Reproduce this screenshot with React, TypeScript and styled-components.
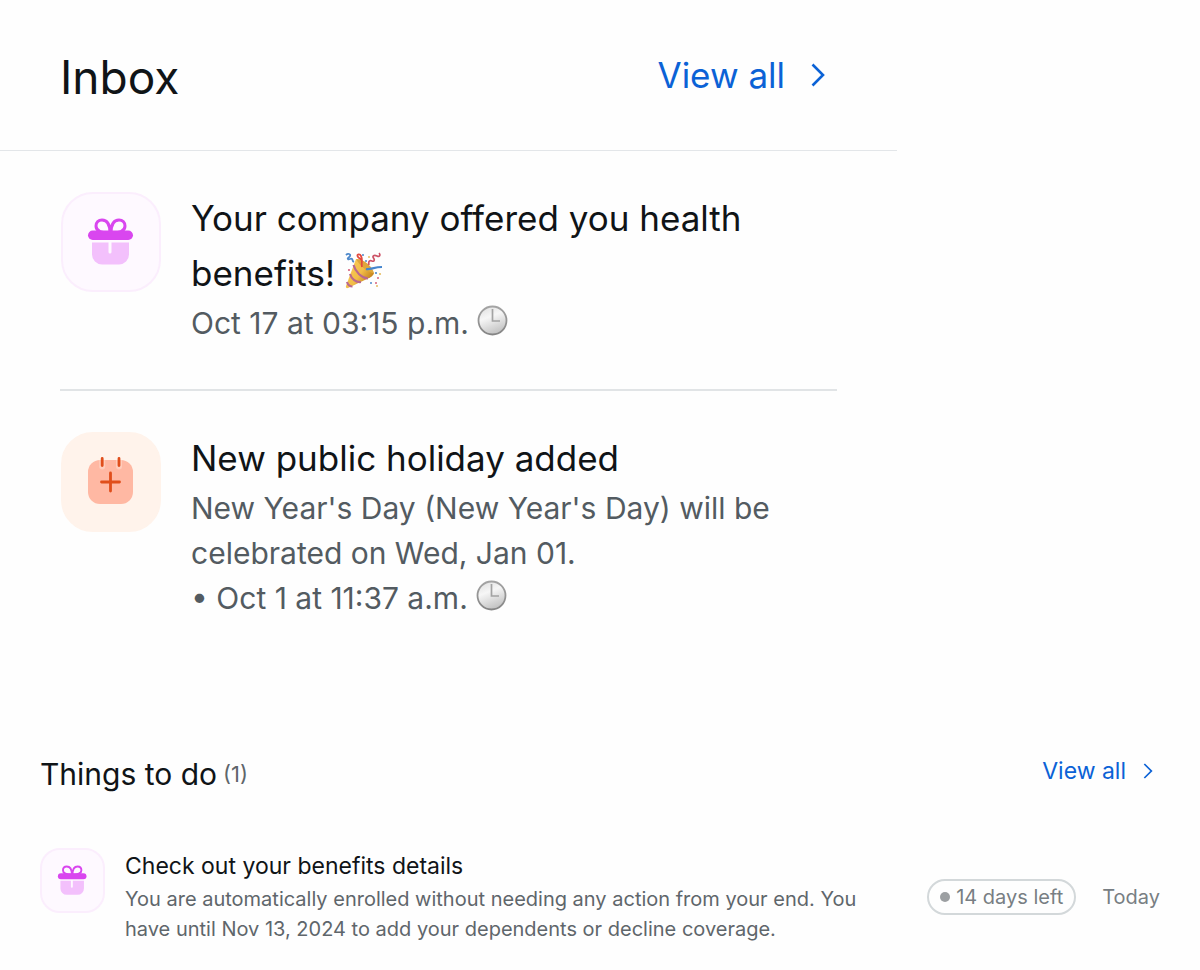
import React from "react";
import styled, { createGlobalStyle } from "styled-components";

const GlobalStyle = createGlobalStyle`
  *, *::before, *::after { box-sizing: border-box; }
  body {
    margin: 0;
    background: #fefefe;
    color: #101417;
    font-family: Inter, "Liberation Sans", sans-serif;
    font-weight: 400;
  }
  h1, h2, h3, p, ul { margin: 0; padding: 0; font-weight: 400; }
  ul { list-style: none; }
`;

const Page = styled.main`
  display: flex;
  flex-direction: column;
  gap: 120px;
`;

const InboxPanel = styled.section`
  width: 100%;
  max-width: 897px;
`;

const InboxHeader = styled.header`
  display: flex;
  align-items: flex-start;
  justify-content: space-between;
  padding: 48px 70px 44px 60px;
  border-bottom: 1px solid #e3e6e9;
`;

const Heading = styled.h2<{ $large?: boolean }>`
  font-size: ${(p) => (p.$large ? 46 : 30)}px;
  line-height: ${(p) => (p.$large ? 58 : 40)}px;
`;

const ViewAllLink = styled.a<{ $large?: boolean }>`
  display: flex;
  align-items: center;
  gap: ${(p) => (p.$large ? 24 : 16)}px;
  color: #0b62d6;
  font-size: ${(p) => (p.$large ? 35 : 23)}px;
  line-height: ${(p) => (p.$large ? 54 : 34)}px;
  text-decoration: none;

  svg {
    width: ${(p) => (p.$large ? 18 : 12)}px;
    height: ${(p) => (p.$large ? 26 : 18)}px;
  }
`;

const MessageList = styled.ul`
  padding: 0 60px;
`;

const Message = styled.li`
  display: flex;
  gap: 30px;
  padding: 40px 0 43px;

  & + & {
    border-top: 2px solid #e1e4e6;
    padding-bottom: 0;
  }
`;

const Tile = styled.div<{ $large?: boolean; $tone: "pink" | "orange" }>`
  flex: none;
  width: ${(p) => (p.$large ? 100 : 65)}px;
  height: ${(p) => (p.$large ? 100 : 65)}px;
  margin: ${(p) => (p.$large ? "1px 0 0 1px" : "0")};
  border-radius: ${(p) => (p.$large ? 32 : 20)}px;
  border: 2px solid ${(p) => (p.$tone === "pink" ? "#fbeefd" : "#fff3eb")};
  background: ${(p) => (p.$tone === "pink" ? "#fef9ff" : "#fff3eb")};

  svg { display: block; width: 100%; height: 100%; }
`;

const MessageBody = styled.div`
  flex: 1;
  min-width: 0;
`;

const MessageTitle = styled.h3`
  font-size: 35px;
  line-height: 55px;
`;

const MessageText = styled.p`
  color: #535b61;
  font-size: 30px;
  line-height: 45px;
`;

const Emoji = styled.svg<{ $size: number; $drop: number }>`
  width: ${(p) => p.$size}px;
  height: ${(p) => p.$size}px;
  vertical-align: -${(p) => p.$drop}px;
`;

const TodoPanel = styled.section`
  padding: 13px 40px 24px;
`;

const TodoHeader = styled.header`
  display: flex;
  align-items: flex-start;
  justify-content: space-between;
  padding-right: 6px;
  margin-bottom: 54px;
`;

const HeadingGroup = styled.div`
  display: flex;
  align-items: center;
  gap: 6px;
`;

const Count = styled.span`
  color: #5f666b;
  font-size: 22px;
  line-height: 40px;
`;

const TodoItem = styled.li`
  display: flex;
  align-items: flex-start;
  gap: 20px;
`;

const TodoBody = styled.div`
  flex: 1;
  max-width: 740px;
`;

const TodoTitle = styled.h3`
  font-size: 23px;
  line-height: 36px;
`;

const TodoText = styled.p`
  color: #5f666b;
  font-size: 20px;
  line-height: 30px;
`;

const TodoMeta = styled.div`
  display: flex;
  align-items: center;
  gap: 26px;
  margin: 31px 0 0 auto;
  color: #787e83;
  font-size: 20px;
  line-height: 32px;
  white-space: nowrap;
`;

const Badge = styled.span`
  display: flex;
  align-items: center;
  gap: 6px;
  padding: 0 11px;
  border: 2px solid #d3d8da;
  border-radius: 18px;

  &::before {
    content: "";
    width: 10px;
    height: 10px;
    border-radius: 50%;
    background: #9c9fa2;
  }
`;

const Chevron = () => (
  <svg viewBox="0 0 18 26" fill="none" aria-hidden="true">
    <path d="M3.5 2.5 14 13 3.5 23.5" stroke="currentColor" strokeWidth="2.6" />
  </svg>
);

const Gift = () => (
  <svg viewBox="2 2 96 96" fill="none" aria-hidden="true">
    <path
      d="M49 41c0-8-2-13-8-13-3.500 0-6 2.300-6 6 0 4.500 3.500 7 14 7Zm1 0c0-8 2-13 8-13 3.500 0 6 2.300 6 6 0 4.500-3.500 7-14 7Z"
      stroke="#d946ef"
      strokeWidth="3"
    />
    <rect x="27" y="38.500" width="45" height="9.500" rx="4.700" fill="#d946ef" />
    <path
      d="M31 50.500h16.500v9.500a1.500 1.500 0 0 0 3 0v-9.500H68v12a10 10 0 0 1-10 10H41a10 10 0 0 1-10-10Z"
      fill="#f3c0fc"
    />
  </svg>
);

const CalendarPlus = () => (
  <svg viewBox="2 2 96 96" fill="none" aria-hidden="true">
    <rect x="27" y="28" width="45" height="44" rx="12" fill="#ffb8a3" />
    <path
      d="M41.200 25v9.500M58 25v9.500"
      stroke="#fff3eb"
      strokeWidth="6"
      strokeLinecap="round"
      opacity=".35"
    />
    <path
      d="M41.200 26.500v7M58 26.500v7M49.500 41v18M40.500 50h18"
      stroke="#e04e1b"
      strokeWidth="2.800"
      strokeLinecap="round"
    />
  </svg>
);

const PartyPopper = () => (
  <Emoji $size={38} $drop={4} viewBox="0 0 38 38" fill="none" role="img" aria-label="Party popper">
    <defs>
      <linearGradient id="cone" x1="5" y1="18" x2="22" y2="30" gradientUnits="userSpaceOnUse">
        <stop stopColor="#f6c650" />
        <stop offset=".5" stopColor="#f2bd48" />
        <stop offset="1" stopColor="#c98822" />
      </linearGradient>
    </defs>
    <path d="M11 7c7 1 15 8 18 14.500-1 2-3 3.500-5 4.500L3 36c-1.500.5-2.500-.5-2-2Z" fill="url(#cone)" />
    <path d="M11 7c8 0 17 8 18 14.500-8-2-14-8-18-14.500Z" fill="#dfa63c" />
    <path d="M8.500 13c2 7 8 13 14.500 13.500M5 22c1.500 5 6 8.500 11 8M2 30c1 3 3 4.500 5.500 4.500" stroke="#b9688e" strokeWidth="2.200" />
    <path d="M17 15c-1-4 1-7-1-11-1-2.500-4-2-3.500 0s3 2.500 4 4" stroke="#e3493d" strokeWidth="1.800" />
    <path d="M1 3c2-2 5-1 4 1s-3 2-2 3 3-1 4 0 0 2 2 3" stroke="#4d88cb" strokeWidth="1.800" />
    <path d="M24 13c-1-4 1-5 3-4s3-1 1.500-3 .5-3.500 3.500-2 3.500-1.500 2-3" stroke="#cd5367" strokeWidth="1.700" />
    <path d="M21 17c4 1 8-2 16-2" stroke="#4586ce" strokeWidth="2.200" />
    <g fill="#4d88cb">
      <circle cx="18" cy="3" r="1" /><circle cx="21" cy="9" r="1" />
      <circle cx="31" cy="21" r="1.100" /><circle cx="26" cy="31" r="1" />
    </g>
    <g fill="#d6607b">
      <circle cx="4" cy="18" r="1.100" /><circle cx="33" cy="26" r="1" />
      <circle cx="31" cy="31" r="1" />
    </g>
    <g fill="#e6bd62">
      <circle cx="35" cy="22" r="1.100" /><circle cx="32" cy="34" r="1" />
      <circle cx="24" cy="5" r="1" />
    </g>
  </Emoji>
);

const Clock = ({ id }: { id: string }) => (
  <Emoji $size={31} $drop={2} viewBox="0 0 31 31" fill="none" role="img" aria-label="Three o'clock">
    <defs>
      <linearGradient id={`${id}-rim`} x1="0" y1="0" x2="0" y2="1">
        <stop stopColor="#a4a4a4" />
        <stop offset="1" stopColor="#858585" />
      </linearGradient>
      <linearGradient id={`${id}-face`} x1=".3" y1="0" x2=".7" y2="1">
        <stop stopColor="#e2e2e2" />
        <stop offset=".35" stopColor="#f6f6f6" />
        <stop offset="1" stopColor="#bdbdbd" />
      </linearGradient>
    </defs>
    <circle cx="15.500" cy="15.500" r="14" fill={`url(#${id}-face)`} stroke={`url(#${id}-rim)`} strokeWidth="1.800" />
    <path d="M15.500 4v12H23" stroke="#a3a3a3" strokeWidth="1.700" />
  </Emoji>
);

export default function App() {
  return (
    <>
      <GlobalStyle />
      <Page>
        <InboxPanel>
          <InboxHeader>
            <Heading $large>Inbox</Heading>
            <ViewAllLink $large href="#inbox">
              View all
              <Chevron />
            </ViewAllLink>
          </InboxHeader>
          <MessageList>
            <Message>
              <Tile $large $tone="pink"><Gift /></Tile>
              <MessageBody>
                <MessageTitle>
                  Your company offered you health benefits! <PartyPopper />
                </MessageTitle>
                <MessageText>Oct 17 at 03:15 p.m. <Clock id="health" /></MessageText>
              </MessageBody>
            </Message>
            <Message>
              <Tile $large $tone="orange"><CalendarPlus /></Tile>
              <MessageBody>
                <MessageTitle>New public holiday added</MessageTitle>
                <MessageText>
                  New Year's Day (New Year's Day) will be celebrated on Wed, Jan 01.
                </MessageText>
                <MessageText>• Oct 1 at 11:37 a.m. <Clock id="holiday" /></MessageText>
              </MessageBody>
            </Message>
          </MessageList>
        </InboxPanel>

        <TodoPanel>
          <TodoHeader>
            <HeadingGroup>
              <Heading>Things to do</Heading>
              <Count>(1)</Count>
            </HeadingGroup>
            <ViewAllLink href="#todo">
              View all
              <Chevron />
            </ViewAllLink>
          </TodoHeader>
          <ul>
            <TodoItem>
              <Tile $tone="pink"><Gift /></Tile>
              <TodoBody>
                <TodoTitle>Check out your benefits details</TodoTitle>
                <TodoText>
                  You are automatically enrolled without needing any action from your end. You
                  have until Nov 13, 2024 to add your dependents or decline coverage.
                </TodoText>
              </TodoBody>
              <TodoMeta>
                <Badge>14 days left</Badge>
                <span>Today</span>
              </TodoMeta>
            </TodoItem>
          </ul>
        </TodoPanel>
      </Page>
    </>
  );
}
